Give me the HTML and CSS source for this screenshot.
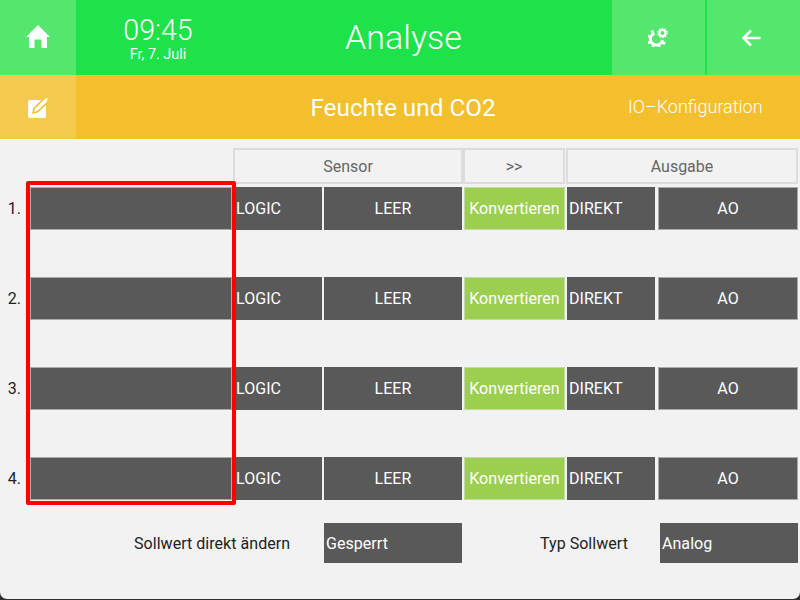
FILE: index.html
```html
<!DOCTYPE html>
<html lang="de">
<head>
<meta charset="utf-8">
<title>Analyse</title>
<link rel="stylesheet" href="styles.css">
</head>
<body>
<div class="screen">
  <header class="topbar">
    <a class="tile home"><svg class="icon" width="24" height="24" viewBox="0 0 24 24"><path fill="#fff" d="M12 0 L24 12 L21 12 L21 23 L15.5 23 L15.5 14.5 L8.5 14.5 L8.5 23 L3 23 L3 12 L0 12 Z"/></svg></a>
    <div class="clock"><div class="time">09:45</div><div class="date">Fr, 7. Juli</div></div>
    <h1 class="page-title">Analyse</h1>
    <a class="tile gear"><svg class="icon" width="20" height="20" viewBox="0 0 20 20">
      <path fill="none" stroke="#fff" stroke-width="3" d="M6.45 6.36 A6 6 0 1 0 14.4 13.04"/>
      <path fill="none" stroke="#fff" stroke-width="2.6" stroke-dasharray="2.8 3.4" d="M5.6 4 A8.5 8.5 0 1 0 16.87 13.5"/>
      <circle cx="14.5" cy="6" r="3" fill="none" stroke="#fff" stroke-width="2.2"/>
      <circle cx="14.5" cy="6" r="4.6" fill="none" stroke="#fff" stroke-width="1.4" stroke-dasharray="1.6 1.29"/>
    </svg></a>
    <a class="tile back"><svg class="icon" width="20" height="18" viewBox="0 0 20 18"><path fill="none" stroke="#fff" stroke-width="2.6" d="M10 1.5 L2.5 9 L10 16.5 M2.5 9 L19.5 9"/></svg></a>
  </header>
  <section class="subbar">
    <a class="subtile"><svg class="icon" width="20" height="21" viewBox="0 0 20 21"><rect x="0" y="3" width="18" height="18" rx="2" fill="#fff"/><path fill="#f3bf2c" d="M4 17 L5.4 11 L15 1.5 L20 6 L10 15.6 Z"/><path fill="#fff" d="M6 15 L6.8 12 L15.6 3 L20 0.5 L18.4 5.4 L9.4 14 Z"/></svg></a>
    <h2 class="sub-title">Feuchte und CO2</h2>
    <div class="sub-link">IO–Konfiguration</div>
  </section>
  <main class="content">
    <div class="heads">
      <div class="head head-sensor">Sensor</div>
      <div class="head head-arrow">&gt;&gt;</div>
      <div class="head head-output">Ausgabe</div>
    </div>
    <div class="rows">
      <div class="row"><span class="num">1.</span><div class="btn framed"></div><div class="btn left">LOGIC</div><div class="btn">LEER</div><div class="btn green">Konvertieren</div><div class="btn left">DIREKT</div><div class="btn framed output">AO</div></div>
      <div class="row"><span class="num">2.</span><div class="btn framed"></div><div class="btn left">LOGIC</div><div class="btn">LEER</div><div class="btn green">Konvertieren</div><div class="btn left">DIREKT</div><div class="btn framed output">AO</div></div>
      <div class="row"><span class="num">3.</span><div class="btn framed"></div><div class="btn left">LOGIC</div><div class="btn">LEER</div><div class="btn green">Konvertieren</div><div class="btn left">DIREKT</div><div class="btn framed output">AO</div></div>
      <div class="row"><span class="num">4.</span><div class="btn framed"></div><div class="btn left">LOGIC</div><div class="btn">LEER</div><div class="btn green">Konvertieren</div><div class="btn left">DIREKT</div><div class="btn framed output">AO</div></div>
      <div class="highlight"></div>
    </div>
    <div class="settings">
      <span class="label label-a">Sollwert direkt ändern</span>
      <div class="btn left field">Gesperrt</div>
      <span class="label label-b">Typ Sollwert</span>
      <div class="btn left field">Analog</div>
    </div>
  </main>
</div>
</body>
</html>
```
FILE: styles.css
```css
* { box-sizing: border-box; }
html, body { margin: 0; height: 600px; overflow: hidden; background: #2e2e2e; }
body { font-family: Roboto, "Liberation Sans", sans-serif; }
.screen { width: 800px; height: 599px; background: #f2f2f2; border-radius: 0 0 7px 7px; overflow: hidden; display: flex; flex-direction: column; }
.topbar { height: 75px; background: #1de24a; display: flex; color: #fff; }
.tile { display: flex; align-items: center; justify-content: center; background: #55e66e; }
.home { width: 76px; }
.home .icon { margin-top: -2px; }
.clock { width: 164px; text-align: center; padding-top: 14px; }
.time { font-size: 28.6px; font-weight: 300; line-height: 32px; }
.date { font-size: 14.4px; line-height: 15px; margin-top: 1px; }
.page-title { width: 372px; margin: 0; text-align: center; font-size: 34px; font-weight: 300; line-height: 75px; padding-right: 45px; }
.gear { width: 93px; margin-right: 2px; }
.gear .icon { margin-right: 2px; margin-top: -2px; }
.back { width: 93px; padding-right: 6px; }
.subbar { height: 64px; background: #f3bf2c; display: flex; align-items: center; color: #fff; }
.subtile { width: 76px; height: 64px; background: #f4c94e; display: flex; align-items: center; justify-content: center; }
.sub-title { width: 654px; margin: 0; font-size: 24.3px; font-weight: 400; text-align: center; }
.sub-link { margin-left: -102px; margin-top: -2px; width: 136px; flex: none; font-size: 18px; font-weight: 300; white-space: nowrap; }
.content { flex: 1; padding-top: 9px; position: relative; }
.heads { display: flex; height: 36px; padding-left: 233px; }
.head { border: 2px solid #dcdcdc; color: #666; font-size: 16px; display: flex; align-items: center; justify-content: center; }
.head-sensor { width: 230px; }
.head-arrow { width: 102px; }
.head-output { width: 232px; margin-left: 1px; }
.rows { position: relative; margin-top: 3px; display: flex; flex-direction: column; gap: 47px; }
.row { display: grid; grid-template-columns: 28px 202px 88px 138px 101px 88px 141px; column-gap: 2px; height: 43px; }
.num { font-size: 16px; color: #222; display: flex; align-items: center; justify-content: flex-end; padding-right: 7px; }
.btn { background: #595959; color: #fff; font-size: 16px; display: flex; align-items: center; justify-content: center; white-space: nowrap; letter-spacing: 0.05px; }
.left { justify-content: flex-start; padding-left: 2px; }
.framed { border: 1px solid #aaa; }
.output { margin-left: 1px; }
.green { background: #9ccf4f; border: 1px solid #c4d9a6; }
.highlight { position: absolute; left: 26px; top: -6px; width: 210px; height: 324px; border: 4px solid #f00; border-radius: 2px; }
.settings { display: flex; align-items: center; height: 40px; margin-top: 23px; font-size: 16px; color: #222; letter-spacing: 0.04px; }
.label { white-space: nowrap; }
.label-a { margin-left: 134px; width: 190px; }
.field { width: 138px; height: 40px; }
.label-b { margin-left: 78px; width: 120px; }
```
